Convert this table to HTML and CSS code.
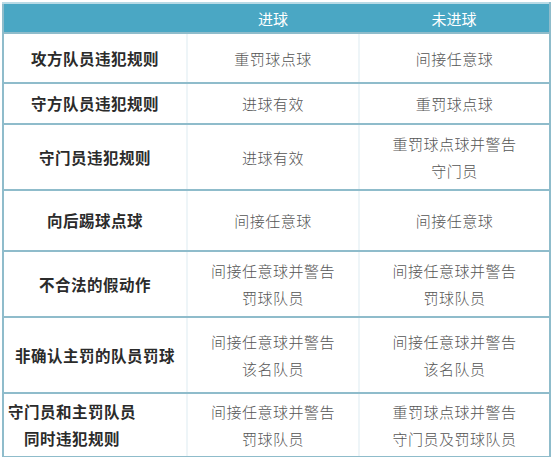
FILE: index.html
```html
<!DOCTYPE html>
<html lang="zh">
<head>
<meta charset="utf-8">
<link rel="stylesheet" href="styles.css">
</head>
<body>
<table class="rules">
  <colgroup>
    <col class="c1"><col class="c2"><col class="c3">
  </colgroup>
  <thead>
    <tr class="head"><th></th><th>进球</th><th>未进球</th></tr>
  </thead>
  <tbody>
    <tr class="r1"><td class="lbl">攻方队员违犯规则</td><td>重罚球点球</td><td>间接任意球</td></tr>
    <tr class="r2"><td class="lbl">守方队员违犯规则</td><td>进球有效</td><td>重罚球点球</td></tr>
    <tr class="r3"><td class="lbl">守门员违犯规则</td><td>进球有效</td><td>重罚球点球并警告<br>守门员</td></tr>
    <tr class="r4"><td class="lbl">向后踢球点球</td><td>间接任意球</td><td>间接任意球</td></tr>
    <tr class="r5"><td class="lbl">不合法的假动作</td><td>间接任意球并警告<br>罚球队员</td><td>间接任意球并警告<br>罚球队员</td></tr>
    <tr class="r6"><td class="lbl">非确认主罚的队员罚球</td><td>间接任意球并警告<br>该名队员</td><td>间接任意球并警告<br>该名队员</td></tr>
    <tr class="r7"><td class="lbl left"><span class="blk">守门员和主罚队员<br>同时违犯规则</span></td><td>间接任意球并警告<br>罚球队员</td><td>重罚球点球并警告<br>守门员及罚球队员</td></tr>
  </tbody>
</table>
</body>
</html>
```
FILE: styles.css
```css
html, body {
  margin: 0;
  padding: 0;
  background: #ffffff;
}
body {
  padding: 2px 0 0 2px;
}
.rules {
  border-collapse: collapse;
  table-layout: fixed;
  width: 547px;
  font-family: "Noto Sans CJK SC", "Noto Sans", sans-serif;
}
.c1 { width: 184px; }
.c2 { width: 172px; }
.c3 { width: 191px; }
.rules th, .rules td {
  border: 2px solid #8fbccb;
  text-align: center;
  vertical-align: middle;
  padding: 0;
}
.head th {
  background: #4aa7c4;
  color: #ffffff;
  font-weight: 400;
  font-size: 15px;
  height: 28px;
  border-top-color: #b9dbe6;
  border-left-style: none;
  border-right-style: none;
}
.head th:first-child { border-left-style: solid; }
.head th:last-child { border-right-style: solid; }
.rules td {
  color: #555555;
  font-size: 15px;
  line-height: 27px;
  font-weight: 300;
  letter-spacing: 0.5px;
}
.rules td.lbl {
  color: #2b2b2b;
  font-weight: 700;
  font-size: 15.5px;
  letter-spacing: 0.5px;
}
.rules td.left {
  text-align: left;
  padding-left: 4px;
}
.blk {
  display: inline-block;
  text-align: center;
}
.rules tbody td { border-left-color: #eef5f8; border-right-color: #eef5f8; }
.rules tbody td:first-child { border-left-color: #8fbccb; }
.rules tbody td:last-child { border-right-color: #8fbccb; }
.r1 td { height: 48px; }
.r2 td { height: 39px; }
.r3 td { height: 64px; }
.r4 td { height: 59px; }
.r5 td { height: 64px; }
.r6 td { height: 74px; }
.r7 td { height: 62px; }
```
